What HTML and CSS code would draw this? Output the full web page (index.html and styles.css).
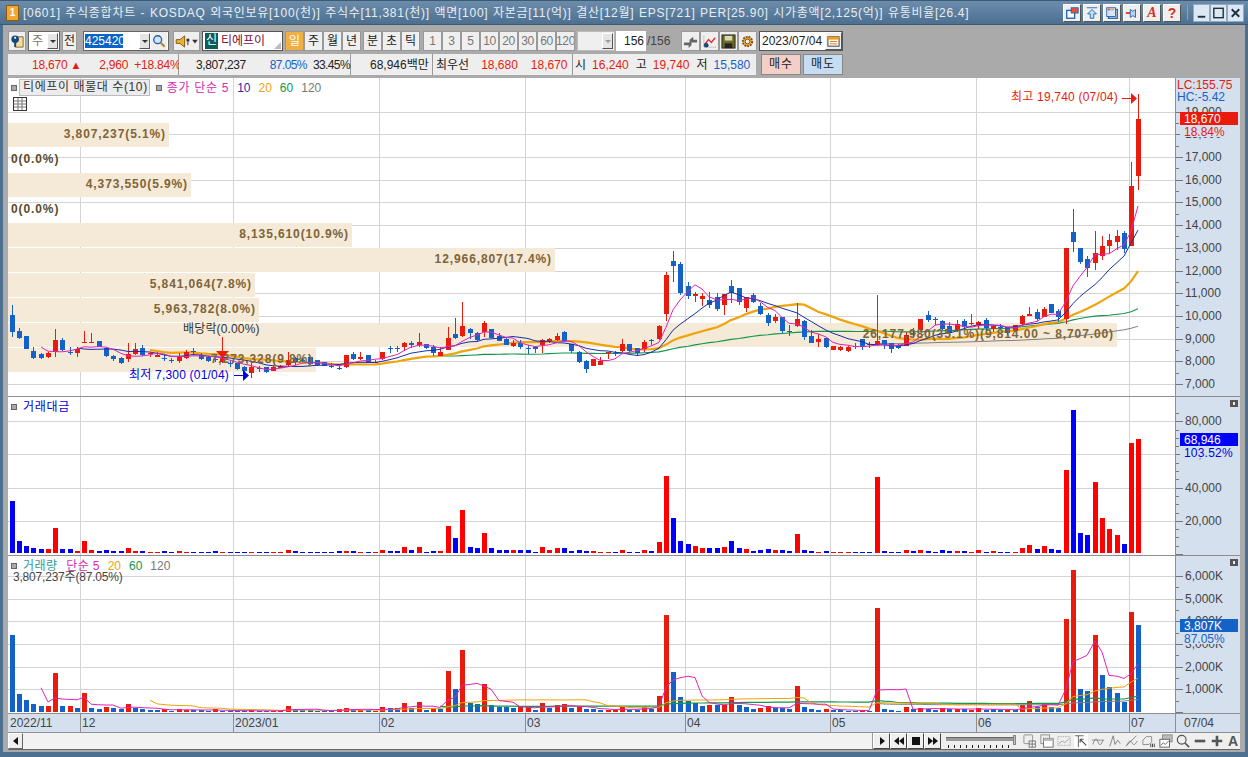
FILE: index.html
```html
<!DOCTYPE html>
<html>
<head>
  <meta charset="UTF-8">
  <title>주식종합차트</title>
  <link rel="stylesheet" href="styles.css">
</head>
<body>
  <div class="window">
    <div class="titlebar">
      <div class="app-icon">1</div>
      <div class="title">[0601] 주식종합차트 - KOSDAQ 외국인보유[100(천)] 주식수[11,381(천)] 액면[100] 자본금[11(억)] 결산[12월] EPS[721] PER[25.90] 시가총액[2,125(억)] 유통비율[26.4]</div>
      <div class="title-tools">
        <div class="tool"><svg viewBox="0 0 16 16"><rect x="2" y="5" width="9" height="9" fill="#fff" stroke="#1c5fb0" stroke-width="1.5"/><rect x="7" y="2" width="8" height="6" fill="#e8503a" stroke="#1c5fb0"/></svg></div>
        <div class="tool"><svg viewBox="0 0 16 16"><path d="M2 2h12M8 4l5 5h-3v5H6V9H3z" fill="#bfe0f5" stroke="#1c5fb0"/></svg></div>
        <div class="tool"><svg viewBox="0 0 16 16"><rect x="4" y="4" width="10" height="10" fill="none" stroke="#1c5fb0" stroke-width="1.5"/><rect x="2" y="2" width="10" height="10" fill="#d5e6f7" stroke="#1c5fb0"/><rect x="3" y="3" width="3" height="2" fill="#e8503a"/><rect x="7" y="3" width="3" height="2" fill="#e8a43a"/></svg></div>
        <div class="tool"><svg viewBox="0 0 16 16"><path d="M1 8h5" stroke="#e0301e" stroke-width="2"/><path d="M6 4l3 2 3-2v9l-3-2-3 2z" fill="#bcd6ee" stroke="#1c5fb0"/></svg></div>
        <div class="tool tool-a">A</div>
        <div class="tool tool-q">?</div>
      </div>
      <div class="title-sep"></div>
      <div class="win-btns">
        <div class="win-btn"><svg viewBox="0 0 16 16"><rect x="4" y="11" width="8" height="2" fill="#1f2f3f"/></svg></div>
        <div class="win-btn"><svg viewBox="0 0 16 16"><rect x="3" y="3" width="10" height="10" fill="none" stroke="#1f2f3f" stroke-width="1.5"/></svg></div>
        <div class="win-btn"><svg viewBox="0 0 16 16"><path d="M4 4l8 8M12 4l-8 8" stroke="#1f2f3f" stroke-width="2"/></svg></div>
      </div>
    </div>

    <div class="frame">
      <div class="toolbar">
        <div class="btn btn-book"><svg viewBox="0 0 16 16"><path d="M6 3h8v11H6z" fill="#f4dc9a" stroke="#7a6a30"/><circle cx="5.500" cy="5.500" r="4" fill="#14457c"/><path d="M5.500 8v6" stroke="#14457c" stroke-width="2"/><rect x="4.500" y="3" width="2" height="2" fill="#fff"/></svg></div>
        <div class="combo combo-kind"><span class="combo-text">주</span><span class="drop"></span></div>
        <div class="btn btn-all">전</div>
        <div class="combo combo-code">
          <span class="code-text">425420</span>
          <span class="drop"></span>
          <span class="search"><svg viewBox="0 0 16 16"><circle cx="6.500" cy="6.500" r="4.500" fill="#cfe6f7" stroke="#1c5fb0" stroke-width="1.5"/><path d="M10 10l4.500 4.500" stroke="#b8862c" stroke-width="2.500"/></svg></span>
        </div>
        <div class="btn btn-speaker"><svg viewBox="0 0 26 16"><path d="M2 6h4l5-4v12l-5-4H2z" fill="#f0b030" stroke="#7a5a10"/><rect x="13" y="5" width="3" height="3" fill="#333"/><rect x="14" y="8" width="1" height="4" fill="#333"/><path d="M19 6h6l-3 4z" fill="#333"/></svg></div>
        <div class="name-box"><span class="name-new">신</span><span class="name-text">티에프이</span><span class="name-grip"></span></div>
        <div class="group">
          <div class="btn period active">일</div>
          <div class="btn period">주</div>
          <div class="btn period">월</div>
          <div class="btn period">년</div>
        </div>
        <div class="group">
          <div class="btn period">분</div>
          <div class="btn period">초</div>
          <div class="btn period">틱</div>
        </div>
        <div class="group group-num">
          <div class="btn period num">1</div>
          <div class="btn period num">3</div>
          <div class="btn period num">5</div>
          <div class="btn period num">10</div>
          <div class="btn period num">20</div>
          <div class="btn period num">30</div>
          <div class="btn period num">60</div>
          <div class="btn period num">120</div>
        </div>
        <div class="combo combo-empty"><span class="combo-text"></span><span class="drop drop-off"></span></div>
        <div class="count-input">156</div>
        <div class="count-total">/156</div>
        <div class="group group-tools">
          <div class="btn period"><svg viewBox="0 0 16 16"><path d="M1 9h6V6l4-3v3h4v3H9v3l-3 3v-3H1z" fill="#666"/></svg></div>
          <div class="btn period"><svg viewBox="0 0 16 16"><path d="M2 2v12h13" fill="none" stroke="#999" stroke-dasharray="1 1"/><path d="M3 11l4-5 3 3 4-5" fill="none" stroke="#d33" stroke-width="1.500"/><circle cx="4.500" cy="12" r="2.500" fill="#14457c"/></svg></div>
          <div class="btn period btn-dark"><svg viewBox="0 0 16 16"><rect x="1" y="1" width="14" height="14" fill="#6d6a1c" stroke="#222"/><rect x="4" y="2" width="8" height="5" fill="#d8d8c0"/><rect x="4" y="10" width="8" height="5" fill="#222"/></svg></div>
          <div class="btn period"><svg viewBox="0 0 16 16"><circle cx="8" cy="8" r="5" fill="#f0b030" stroke="#8a4a10" stroke-width="2" stroke-dasharray="2 1"/><circle cx="8" cy="8" r="2.500" fill="#eee" stroke="#555"/></svg></div>
        </div>
        <div class="date-input"><span>2023/07/04</span><span class="cal"><svg viewBox="0 0 14 14"><rect x="1" y="2" width="12" height="10" fill="#fff" stroke="#333"/><rect x="1" y="2" width="12" height="3" fill="#f0a020"/><path d="M3 7h8M3 9.500h8" stroke="#d87010"/></svg></span></div>
      </div>

      <div class="quote-row">
        <div class="seg seg-price">
          <span class="red">18,670</span><span class="red up-mark">▲</span>
          <span class="red ml-change">2,960</span><span class="red ml-rate">+18.84%</span>
        </div>
        <div class="seg seg-vol">
          <span class="ml-volume">3,807,237</span><span class="blue ml-pct">87.05%</span><span class="ml-turn">33.45%</span>
        </div>
        <div class="seg seg-amount"><span>68,946백만</span></div>
        <div class="seg seg-best">
          <span>최우선</span><span class="red ml-ask">18,680</span><span class="red ml-bid">18,670</span>
        </div>
        <div class="seg seg-ohl">
          <span>시</span><span class="red ml-val">16,240</span>
          <span class="ml-key">고</span><span class="red ml-val">19,740</span>
          <span class="ml-key">저</span><span class="blue ml-val">15,580</span>
        </div>
        <div class="order buy">매수</div>
        <div class="order sell">매도</div>
      </div>

      <div class="chart">
        <div class="panel panel-main">
          <div class="plot">
            <svg id="plotMain"></svg>
            <div class="legend legend-main">
              <span class="dot"></span><span class="legend-box">티에프이 매물대 수(10)</span>
              <span class="dot dot-gap"></span>
              <span class="magenta sma-name">종가 단순 5</span><span class="navy">10</span><span class="orange">20</span><span class="green">60</span><span class="gray">120</span>
            </div>
            <div class="grid-icon"><svg viewBox="0 0 14 14"><rect x="0.500" y="0.500" width="13" height="13" fill="#fff" stroke="#333"/><path d="M1 4h12M1 7h12M1 10h12M5 1v12M9 1v12" stroke="#777"/></svg></div>
          </div>
          <svg class="axis" id="axisMain"></svg>
        </div>
        <div class="panel panel-amount">
          <div class="plot">
            <svg id="plotAmount"></svg>
            <div class="legend"><span class="dot"></span><span class="amount-name">거래대금</span></div>
          </div>
          <svg class="axis" id="axisAmount"></svg>
          <div class="panel-close"></div>
        </div>
        <div class="panel panel-volume">
          <div class="plot">
            <svg id="plotVolume"></svg>
            <div class="legend">
              <span class="dot"></span><span class="teal">거래량</span><span class="magenta sma-vol">단순 5</span><span class="orange">20</span><span class="green">60</span><span class="gray">120</span>
            </div>
            <div class="volume-info">3,807,237주(87.05%)</div>
          </div>
          <svg class="axis" id="axisVolume"></svg>
          <div class="panel-close"></div>
        </div>
        <div class="date-row">
          <svg id="dateAxis"></svg>
          <div class="date-last">07/04</div>
        </div>
      </div>

      <div class="scroll-row">
        <div class="scroll-btn"><svg viewBox="0 0 10 10"><path d="M7 1v8L2 5z" fill="#111"/></svg></div>
        <div class="scroll-track"></div>
        <div class="player">
          <div class="play-btn"><svg viewBox="0 0 10 10"><path d="M3 1l5 4-5 4z" fill="#111"/></svg></div>
          <div class="play-btn"><svg viewBox="0 0 10 10"><path d="M5 1v8L0 5zM10 1v8L5 5z" fill="#111"/></svg></div>
          <div class="play-btn"><svg viewBox="0 0 10 10"><rect x="1" y="1" width="8" height="8" fill="#111"/></svg></div>
          <div class="play-btn"><svg viewBox="0 0 10 10"><path d="M0 1l5 4-5 4zM5 1l5 4-5 4z" fill="#111"/></svg></div>
        </div>
        <div class="slider">
          <div class="slider-line"></div>
          <div class="slider-ticks"></div>
          <div class="slider-thumb"></div>
        </div>
        <div class="chart-tools">
          <svg viewBox="0 0 16 16"><rect x="1" y="1" width="10" height="10" rx="1" fill="none" stroke="#888"/><rect x="7" y="8" width="7" height="7" fill="#fff" stroke="#666"/><path d="M7 11.500h7M10.500 8v7" stroke="#666"/></svg>
          <svg viewBox="0 0 16 16"><rect x="1" y="1" width="10" height="10" fill="none" stroke="#888"/><rect x="4" y="5" width="11" height="10" fill="#fff" stroke="#666"/><rect x="4" y="5" width="11" height="3" fill="#bbb"/></svg>
          <svg viewBox="0 0 16 16"><rect x="1" y="3" width="14" height="10" fill="none" stroke="#999" stroke-dasharray="1 1"/><path d="M2 11l4-3 3 2 5-5" fill="none" stroke="#999"/></svg>
          <svg class="pressed" viewBox="0 0 16 16"><path d="M1 2h10M5 2v13" stroke="#555"/><path d="M7 6l7 7M7 6h4M7 6v4" stroke="#555" stroke-width="1.300" fill="none"/></svg>
          <svg viewBox="0 0 16 16"><path d="M1 7h14" stroke="#888"/><path d="M2 12c3-8 4-8 6-3s3 4 6-2" fill="none" stroke="#777"/></svg>
          <svg viewBox="0 0 16 16"><path d="M2 14L6 2l2 10 3-5 3 4" fill="none" stroke="#777"/></svg>
          <svg viewBox="0 0 16 16"><path d="M1 14L13 2" stroke="#777"/><path d="M2 13c3-6 4-6 6-3s3 3 6-2" fill="none" stroke="#777"/></svg>
          <svg viewBox="0 0 16 16"><path d="M1 7l4-4h6v6l-3 3H1z" fill="#eee" stroke="#888"/><path d="M10 11v4M12 11v4M14 11v4" stroke="#333"/></svg>
          <svg viewBox="0 0 16 16"><rect x="4" y="1" width="11" height="8" fill="#bbb" stroke="#888"/><rect x="1" y="6" width="11" height="9" fill="#fff" stroke="#555"/><path d="M2 13l3-3 2 2 4-4" fill="none" stroke="#555"/></svg>
          <svg viewBox="0 0 16 16"><circle cx="6.500" cy="6.500" r="5" fill="none" stroke="#555" stroke-width="1.300"/><path d="M10 10l5 5" stroke="#555" stroke-width="2"/></svg>
          <svg viewBox="0 0 16 16"><path d="M2 8h12" stroke="#555" stroke-width="3"/></svg>
          <svg viewBox="0 0 16 16"><path d="M2 8h12M8 2v12" stroke="#555" stroke-width="3"/></svg>
          <span class="tool-font">A</span>
        </div>
      </div>
    </div>
  </div>
  <script src="chart.js"></script>
</body>
</html>
```

FILE: styles.css
```css
html, body {
  margin: 0;
  padding: 0;
  overflow: hidden;
}
body {
  font-family: "Liberation Sans", "Noto Sans CJK KR", sans-serif;
  font-size: 12px;
  line-height: 14px;
  color: #222;
}
.window {
  width: 1248px;
  height: 757px;
  display: flex;
  flex-direction: column;
}

/* title bar */
.titlebar {
  height: 25px;
  flex: none;
  box-sizing: border-box;
  display: flex;
  align-items: center;
  background: linear-gradient(#6c8cab, #4d7090);
  border-top: 1px solid #3c5a74;
  border-bottom: 1px solid #3c5a74;
}
.app-icon {
  width: 11px;
  height: 14px;
  margin-left: 6px;
  background: #f0a830;
  border: 1px solid #8a5a10;
  color: #fff;
  font-size: 10px;
  font-weight: bold;
  line-height: 14px;
  text-align: center;
}
.title {
  margin-left: 4px;
  color: #e8eef4;
  letter-spacing: 0.72px;
  word-spacing: 0.6px;
  white-space: nowrap;
  flex: 1;
}
.title-tools {
  display: flex;
  gap: 2px;
}
.tool {
  width: 18px;
  height: 18px;
  box-sizing: border-box;
  background: #efefef;
  border: 1px solid;
  border-color: #fff #555 #555 #fff;
  display: flex;
  align-items: center;
  justify-content: center;
}
.tool svg {
  width: 14px;
  height: 14px;
}
.tool-a {
  font: italic bold 14px "Liberation Serif", serif;
  color: #d8301e;
}
.tool-q {
  font-weight: bold;
  font-size: 14px;
  color: #d8301e;
}
.title-sep {
  width: 1px;
  height: 15px;
  margin: 0 5px 0 6px;
  background: #8aa2b8;
}
.win-btns {
  display: flex;
  margin-right: 4px;
}
.win-btn {
  width: 17px;
  height: 18px;
  box-sizing: border-box;
  background: #dce8f3;
  border: 1px solid #93abc2;
}
.win-btn svg {
  display: block;
  width: 15px;
  height: 16px;
}

/* grey frame */
.frame {
  flex: 1;
  min-height: 0;
  box-sizing: border-box;
  display: flex;
  flex-direction: column;
  background: #aaa;
  border: 3px solid #4d7090;
  border-top: none;
  border-bottom-width: 5px;
  padding: 6px 5px 0 5px;
}

/* toolbar */
.toolbar {
  height: 20px;
  flex: none;
  display: flex;
}
.btn {
  height: 20px;
  box-sizing: border-box;
  background: #efefef;
  border: 1px solid;
  border-color: #fff #666 #666 #fff;
  outline: 1px solid #999;
  outline-offset: -1px;
  display: flex;
  align-items: center;
  justify-content: center;
}
.btn svg {
  width: 15px;
  height: 15px;
}
.btn-book {
  width: 18px;
}
.btn-all {
  width: 15px;
  margin-left: 2px;
}
.combo {
  height: 20px;
  box-sizing: border-box;
  background: #fff;
  border: 1px solid #666;
  display: flex;
  align-items: center;
}
.combo-kind {
  width: 32px;
  margin-left: 2px;
}
.combo-text {
  flex: 1;
  padding-left: 3px;
  color: #777;
}
.drop {
  width: 11px;
  height: 16px;
  margin-right: 1px;
  box-sizing: border-box;
  background: #e4e4e4;
  border: 1px solid;
  border-color: #fff #555 #555 #fff;
  position: relative;
}
.drop::after {
  content: "";
  position: absolute;
  left: 2px;
  top: 6px;
  border: 3px solid transparent;
  border-top: 3px solid #333;
  border-bottom: none;
}
.combo-code {
  width: 86px;
  margin-left: 6px;
}
.code-text {
  margin-left: 1px;
  width: 38px;
  color: #fff;
  background: #0a64c8;
}
.combo-code .drop {
  margin-left: 16px;
}
.search {
  width: 16px;
  height: 18px;
  background: #efefef;
  display: flex;
  align-items: center;
  justify-content: center;
}
.search svg {
  width: 14px;
  height: 14px;
}
.btn-speaker {
  width: 27px;
  margin-left: 4px;
}
.btn-speaker svg {
  width: 25px;
}
.name-box {
  width: 81px;
  height: 20px;
  margin-left: 2px;
  box-sizing: border-box;
  background: #fff;
  border: 1px solid #555;
  display: flex;
  align-items: center;
  position: relative;
}
.name-new {
  width: 13px;
  height: 16px;
  margin-left: 2px;
  background: #0c5c58;
  color: #fff;
  text-align: center;
  line-height: 15px;
}
.name-text {
  margin-left: 3px;
  color: #7a0a3c;
}
.name-grip {
  position: absolute;
  right: 1px;
  bottom: 1px;
  border-left: 7px solid transparent;
  border-bottom: 7px solid #bbb;
}
.group {
  display: flex;
  margin-left: 2px;
}
.period {
  width: 19px;
}
.period.active {
  background: #f0ae44;
  color: #fff;
}
.group-num {
  margin-left: 3px;
}
.num {
  color: #777;
  letter-spacing: -0.4px;
}
.combo-empty {
  width: 38px;
  margin-left: 2px;
  background: #efefef;
  border-color: #bbb;
}
.drop-off::after {
  border-top-color: #999;
}
.count-input {
  width: 30px;
  height: 20px;
  margin-left: 1px;
  box-sizing: border-box;
  background: #fff;
  padding-right: 2px;
  line-height: 20px;
  text-align: right;
}
.count-total {
  width: 34px;
  height: 20px;
  margin-left: 1px;
  line-height: 20px;
  color: #444;
}
.group-tools {
  margin-left: 0;
}
.btn-dark {
  border-color: #555 #fff #fff #555;
}
.date-input {
  width: 84px;
  height: 20px;
  margin-left: 2px;
  box-sizing: border-box;
  background: #fff;
  border: 1px solid #555;
  padding-left: 2px;
  display: flex;
  align-items: center;
  justify-content: space-between;
}
.cal {
  width: 17px;
  height: 18px;
  box-sizing: border-box;
  background: #efefef;
  border: 1px solid;
  border-color: #fff #555 #555 #fff;
  display: flex;
  align-items: center;
  justify-content: center;
}
.cal svg {
  width: 13px;
  height: 13px;
}

/* quote row */
.quote-row {
  height: 21px;
  margin-top: 3px;
  flex: none;
  display: flex;
}
.seg {
  height: 21px;
  box-sizing: border-box;
  background: #eee;
  border-right: 1px solid #999;
  display: flex;
  align-items: center;
  white-space: nowrap;
}
.seg-price {
  width: 171px;
  padding-left: 24px;
  letter-spacing: -0.2px;
}
.seg-vol {
  width: 172px;
}
.seg-amount {
  width: 82px;
  padding-left: 19px;
}
.seg-best {
  width: 140px;
  padding-left: 3px;
}
.seg-ohl {
  width: 183px;
  padding-left: 2px;
  border-right: none;
}
.red { color: #e81b0c; }
.blue { color: #1461c8; }
.up-mark { margin-left: 3px; font-size: 11px; }
.ml-change { margin-left: 18px; }
.ml-rate { margin-left: 6px; }
.ml-volume { margin-left: 17px; letter-spacing: -0.4px; }
.ml-pct { margin-left: 24px; letter-spacing: -0.6px; }
.ml-turn { margin-left: 6px; letter-spacing: -0.6px; }
.ml-ask { margin-left: 12px; }
.ml-bid { margin-left: 13px; }
.ml-val { margin-left: 6px; }
.ml-key { margin-left: 7px; }
.order {
  width: 40px;
  height: 21px;
  box-sizing: border-box;
  border: 1px solid #888;
  text-align: center;
  line-height: 19px;
  letter-spacing: 1px;
}
.buy {
  margin-left: 5px;
  background: #f3cfc8;
}
.sell {
  margin-left: 2px;
  background: #c5dcf2;
}

/* chart panels */
.chart {
  height: 654px;
  margin-top: 3px;
  flex: none;
  display: flex;
  flex-direction: column;
  background: #fff;
}
.panel {
  display: flex;
  flex: none;
  box-sizing: border-box;
  position: relative;
  border-bottom: 1px solid #8f8f8f;
}
.panel-main { height: 319px; }
.panel-amount { height: 159px; }
.panel-volume { height: 158px; }
.plot {
  width: 1167px;
  height: 100%;
  flex: none;
  position: relative;
}
.plot svg {
  display: block;
}
.axis {
  flex: none;
  display: block;
  background: #d5e0ef;
  border-left: 1px solid #8f8f8f;
}
text {
  font-family: "Liberation Sans", "Noto Sans CJK KR", sans-serif;
  font-size: 12px;
}
.peach-text {
  font-weight: bold;
  fill: #7e6437;
  letter-spacing: 0.9px;
}
.peach-zero {
  font-weight: bold;
  fill: #5c4a28;
  letter-spacing: 0.9px;
}
.axis-text { fill: #444; }
.hl-text { fill: #fff; }
.lc-text { fill: #e81b0c; }
.hc-text { fill: #1461c8; }
.note-dark { fill: #333; letter-spacing: 0.15px; }
.note-blue { fill: #0000e0; letter-spacing: 0.2px; }
.note-red { fill: #e81b0c; letter-spacing: 0.2px; }

/* legends over the plots */
.legend {
  position: absolute;
  left: 3px;
  top: 1px;
  height: 17px;
  display: flex;
  align-items: center;
  white-space: nowrap;
}
.dot {
  width: 4px;
  height: 4px;
  background: #aaa;
  border: 1px solid #666;
  margin-right: 2px;
}
.dot-gap {
  margin-left: 6px;
  margin-right: 5px;
}
.legend-box {
  height: 15px;
  background: #ececec;
  border: 1px solid #bbb;
  padding: 0 1px 0 3px;
  line-height: 15px;
  color: #333;
  letter-spacing: 0.6px;
}
.sma-name { letter-spacing: 0.7px; }
.sma-vol { letter-spacing: 0.3px; }
.magenta { color: #d42ab0; }
.navy { color: #1a2fa8; margin-left: 8px; }
.orange { color: #eea40a; margin-left: 8px; }
.green { color: #12964a; margin-left: 8px; }
.gray { color: #777; margin-left: 8px; }
.teal {
  color: #339a9a;
  margin-left: 4px;
  margin-right: 9px;
  letter-spacing: 0.4px;
}
.amount-name { color: #0000e0; margin-left: 4px; letter-spacing: 0.7px; }
.grid-icon {
  position: absolute;
  left: 5px;
  top: 19px;
  width: 14px;
  height: 14px;
}
.volume-info {
  position: absolute;
  left: 5px;
  top: 14px;
  color: #444;
  letter-spacing: -0.2px;
}
.panel-close {
  position: absolute;
  right: 2px;
  top: 3px;
  width: 8px;
  height: 7px;
  background: #555;
}
.panel-close::after {
  content: "";
  position: absolute;
  left: 3px;
  top: 2px;
  width: 2px;
  height: 3px;
  background: #eee;
}
.date-row {
  height: 18px;
  flex: none;
  background: #d5e0ef;
  display: flex;
  border-bottom: 1px solid #8f8f8f;
}
.date-row svg {
  width: 1167px;
  height: 18px;
  flex: none;
  display: block;
}
.date-last {
  flex: 1;
  border-left: 1px solid #8f8f8f;
  padding-left: 8px;
  line-height: 18px;
  color: #444;
}

/* bottom scroll row */
.scroll-row {
  height: 16px;
  margin-top: 1px;
  flex: none;
  display: flex;
  align-items: stretch;
  background: #efefef;
  border-bottom: 1px solid #666;
}
.scroll-btn {
  width: 15px;
  box-sizing: border-box;
  border: 1px solid;
  border-color: #fff #666 #666 #fff;
  display: flex;
  align-items: center;
  justify-content: center;
}
.scroll-btn svg,
.play-btn svg {
  width: 10px;
  height: 10px;
}
.scroll-track {
  width: 849px;
  background: #f2f2f2;
  border-right: 1px solid #999;
}
.player {
  display: flex;
}
.play-btn {
  width: 17px;
  box-sizing: border-box;
  border: 1px solid;
  border-color: #fff #444 #444 #fff;
  display: flex;
  align-items: center;
  justify-content: center;
}
.slider {
  width: 70px;
  margin-left: 5px;
  position: relative;
}
.slider-line {
  position: absolute;
  left: 0;
  right: 2px;
  top: 4px;
  height: 3px;
  background: #999;
  border-top: 1px solid #666;
}
.slider-ticks {
  position: absolute;
  left: 2px;
  right: 2px;
  top: 12px;
  height: 3px;
  background: repeating-linear-gradient(90deg, #222 0, #222 1px, transparent 1px, transparent 6px);
}
.slider-thumb {
  position: absolute;
  right: 0;
  top: 2px;
  width: 3px;
  height: 10px;
  background: #bbb;
  border: 1px solid #888;
  box-sizing: border-box;
}
.chart-tools {
  margin-left: 7px;
  display: flex;
  align-items: center;
  gap: 3px;
}
.chart-tools svg {
  width: 14px;
  height: 14px;
  flex: none;
}
.chart-tools .pressed {
  background: #fff;
}
.tool-font {
  font-weight: bold;
  font-size: 14px;
  color: #555;
  margin-left: 1px;
}
```

FILE: chart.js
```js
// candles in screen px: [high, body top, body bottom, low, up?]
const candles = [
  [305,315,332,337,0],[328,331,338,339,0],[336,336,349,349,0],[347,351,358,359,0],[353,354,358,359,0],
  [352,353,357,358,1],[329,340,352,357,1],[338,340,350,351,0],[347,352,353,355,0],[347,349,353,357,1],
  [331,342,343,343,1],[333,342,343,343,1],[341,341,347,347,0],[347,348,356,357,0],[355,356,359,361,0],
  [357,358,363,364,0],[343,354,359,362,1],[343,349,354,355,1],[345,348,355,356,0],[352,353,354,357,1],
  [352,355,357,357,1],[354,358,358,361,0],[358,360,361,363,0],[353,356,361,363,1],[350,352,358,359,1],
  [348,351,352,355,0],[353,355,359,360,0],[356,357,361,362,0],[358,359,360,362,0],[353,358,362,363,1],
  [361,363,363,367,0],[363,363,369,370,0],[366,367,371,372,0],[363,367,373,378,1],[366,368,369,372,0],
  [367,367,372,373,0],[366,367,371,371,1],[365,366,368,368,1],[352,360,365,367,1],[357,358,362,365,0],
  [358,360,361,362,0],[357,357,364,365,0],[360,360,365,366,0],[362,362,366,366,0],[363,366,366,368,0],
  [365,368,368,370,0],[355,355,367,368,1],[352,354,359,360,0],[352,357,359,360,1],[355,355,363,363,0],
  [360,362,362,363,1],[352,352,359,360,1],[346,348,348,353,0],[346,348,348,352,0],[342,343,347,351,1],
  [341,343,345,348,0],[333,342,345,347,1],[344,344,348,349,0],[345,347,353,356,0],[347,352,356,356,1],
  [327,338,350,350,1],[318,334,338,339,0],[302,326,336,337,1],[328,329,333,339,0],[332,333,340,342,0],
  [321,323,332,337,1],[329,329,338,338,0],[333,336,341,341,0],[337,339,345,345,0],[340,343,346,347,1],
  [340,343,347,349,0],[345,348,349,354,0],[346,347,349,353,0],[339,340,345,353,1],[338,339,341,343,1],
  [333,336,340,341,1],[331,332,341,342,0],[344,344,351,353,0],[351,352,362,363,0],[360,361,369,373,0],
  [359,359,366,366,1],[357,361,365,365,1],[352,352,353,359,1],[351,353,353,356,0],[339,344,351,352,1],
  [344,344,351,353,0],[348,348,353,356,0],[340,342,349,352,1],[339,340,340,345,0],[325,326,339,340,1],
  [272,275,314,321,1],[251,261,266,282,0],[262,264,293,295,0],[282,286,296,299,0],[292,294,296,302,1],
  [293,296,299,306,1],[292,300,305,308,0],[293,297,309,311,0],[294,294,305,315,1],[280,286,293,303,0],
  [288,288,302,305,0],[297,297,308,312,1],[293,295,302,303,0],[303,306,314,315,0],[313,315,323,326,0],
  [314,317,321,323,1],[317,317,331,333,0],[325,331,331,336,0],[303,319,326,327,1],[320,321,337,340,0],
  [330,336,343,343,0],[334,339,342,347,1],[337,338,347,348,0],[346,346,350,350,1],[346,347,350,351,1],
  [346,347,351,352,1],[343,346,346,349,0],[339,339,347,350,0],[342,344,344,348,0],[295,341,345,346,1],
  [340,340,345,349,0],[343,343,349,353,0],[344,345,348,349,0],[332,335,346,346,1],[328,333,333,338,0],
  [319,319,330,331,1],[311,315,320,322,0],[317,319,319,325,0],[320,321,329,330,0],[322,326,333,333,0],
  [320,324,330,332,1],[319,321,327,329,0],[314,323,324,325,1],[321,322,325,329,1],[318,320,328,330,0],
  [325,326,329,332,1],[324,327,327,330,0],[327,327,333,335,0],[325,325,331,332,1],[315,316,324,325,1],
  [307,314,316,316,1],[309,312,319,321,0],[307,309,317,317,1],[304,304,313,313,0],[309,311,317,322,0],
  [248,248,319,324,1],[209,232,242,252,0],[248,248,262,264,0],[256,259,268,277,0],[231,253,263,270,1],
  [236,246,256,260,1],[234,240,246,253,1],[230,236,242,250,1],[231,233,249,253,0],[162,186,246,246,1],
  [94,119,176,190,1]
];

// volume bar heights in px, negative = blue bar
const volume = [
  -77,-18,-12,-8,-6,6,39,-6,6,-4,19,-4,-3,5,-4,-3,8,-4,-3,-2,
  -2,3,-1,3,2,-2,-2,-1,3,-1,-1,-1,-1,2,-1,-1,1,1,6,-3,
  -2,-2,-1,-1,-1,3,4,-3,2,-2,1,5,-4,-4,9,-4,10,-2,4,-3,
  41,-23,62,-9,-8,28,-7,-5,-5,-4,5,5,-2,9,-4,7,8,-4,5,-3,
  -3,-2,2,2,5,-2,-2,5,-3,16,97,-40,-15,-11,-9,-6,7,-7,7,15,
  -7,-5,-3,4,6,-4,-4,-3,26,-5,-3,-2,3,-2,-2,-1,-1,2,-1,104,
  -3,-2,-1,5,-3,4,-3,-2,4,-3,3,-3,2,4,-2,-3,-2,2,-2,7,
  11,-5,9,-5,-4,93,142,-23,-21,77,-37,-25,-19,-10,100,-87
];

// trading value bars that were read off directly
const amountFixed = { 90: 77, 108: 19, 119: 76, 145: 83, 146: 143, 149: 71, 154: 110, 155: 114 };

const monthLines = [80, 233, 379, 525, 685, 830, 976, 1129];
const monthLabels = [[10, '2022/11'], [82, '12'], [235, '2023/01'], [381, '02'], [527, '03'], [687, '04'], [832, '05'], [978, '06'], [1131, '07']];

const RED = '#e81b0c', BLUE = '#1461c8';
const cx = i => Math.round(11.5 + 7.27 * i);
const priceY = p => 384 - (p - 7000) * 0.0227;

function rect(x, y, w, h, fill) {
  return `<rect x="${x}" y="${y}" width="${w}" height="${h}" fill="${fill}" shape-rendering="crispEdges"/>`;
}
function line(x1, y1, x2, y2, stroke) {
  return `<line x1="${x1}" y1="${y1}" x2="${x2}" y2="${y2}" stroke="${stroke}" shape-rendering="crispEdges"/>`;
}
function text(x, y, str, cls, anchor) {
  return `<text x="${x}" y="${y}" class="${cls}"${anchor ? ' text-anchor="end"' : ''}>${str}</text>`;
}
function polyline(points, stroke, width) {
  const p = points.map(a => a.join(',')).join(' ');
  return `<polyline points="${p}" fill="none" stroke="${stroke}" stroke-width="${width}"/>`;
}
function movingAvg(values, n, toY) {
  const pts = [];
  for (let i = n - 1; i < values.length; i++) {
    let sum = 0;
    for (let j = i - n + 1; j <= i; j++) sum += values[j];
    pts.push([cx(i), +toY(sum / n).toFixed(1)]);
  }
  return pts;
}
function paint(id, x, y, w, h, content) {
  const svg = document.getElementById(id);
  svg.setAttribute('viewBox', `${x} ${y} ${w} ${h}`);
  svg.setAttribute('width', w);
  svg.setAttribute('height', h);
  svg.innerHTML = content;
}
function gridLines(top, bottom, ys) {
  let out = '';
  ys.forEach(y => { out += line(8, y + 0.5, 1175, y + 0.5, '#d4d4d4'); });
  monthLines.forEach(x => { out += line(x + 0.5, top, x + 0.5, bottom, '#d4d4d4'); });
  return out;
}

/* ---- price panel ---- */
const peachRows = [
  [123, 169, '3,807,237(5.1%)'],
  [148, 0, '0(0.0%)'],
  [173, 191, '4,373,550(5.9%)'],
  [198, 0, '0(0.0%)'],
  [223, 352, '8,135,610(10.9%)'],
  [248, 555, '12,966,807(17.4%)'],
  [273, 255, '5,841,064(7.8%)'],
  [298, 259, '5,963,782(8.0%)'],
  [323, 1117, '26,177,980(35.1%)(9,814.00 ~ 8,707.00)'],
  [348, 316, '7,273,328(9.8%)']
];

let main = '';
const ticks = [];
for (let p = 7000; p <= 19000; p += 1000) ticks.push(Math.round(priceY(p)));
main += gridLines(78, 396, ticks);
peachRows.forEach(r => { if (r[1]) main += rect(8, r[0], r[1] - 8, 24, '#f5e9d8'); });

const closes = candles.map(c => (c[4] ? c[1] : c[2]));
main += polyline(movingAvg(closes, 120, y => y), '#808080', 1);
main += polyline(movingAvg(closes, 60, y => y), '#12964a', 1.1);
main += polyline(movingAvg(closes, 20, y => y), '#eea40a', 2.2);

candles.forEach((c, i) => {
  const x = cx(i), col = c[4] ? RED : BLUE;
  main += rect(x, c[0], 1, c[3] - c[0], col);
  main += rect(x - 2, c[1], 5, Math.max(c[2] - c[1], 1), col);
});

main += polyline(movingAvg(closes, 10, y => y), '#1a2fa8', 1);
main += polyline(movingAvg(closes, 5, y => y), '#e024b8', 1);

peachRows.forEach(r => {
  if (r[1]) main += text(r[1] - 3, r[0] + 15, r[2], 'peach-text', true);
  else main += text(11, r[0] + 15, r[2], 'peach-zero');
});

main += text(183, 333, '배당락(0.00%)', 'note-dark');
main += line(222.5, 337, 222.5, 351, '#e81b0c') + '<path d="M216 351h13l-6.500 7z" fill="#e81b0c"/>';
main += text(129, 379, '최저 7,300 (01/04)', 'note-blue');
main += line(234, 375.5, 244, 375.5, '#0000e0') + '<path d="M243 370v11l6-5.500z" fill="#0000e0"/>';
main += text(1011, 101, '최고 19,740 (07/04)', 'note-red');
main += line(1122, 98.5, 1132, 98.5, '#e81b0c') + '<path d="M1131 93v11l6-5.500z" fill="#e81b0c"/>';
paint('plotMain', 8, 78, 1167, 318, main);

/* ---- price axis ---- */
function axisTicks(from, to, step, minor, toY, fmt) {
  const x0 = 1176;
  let out = '';
  for (let v = from; v <= to; v += minor) {
    const y = Math.round(toY(v)) + 0.5, major = v % step === 0;
    out += line(x0, y, x0 + (major ? 7 : 3), y, '#777');
    if (major && v > 0) out += text(x0 + 9, y + 3.5, fmt(v), 'axis-text');
  }
  return out;
}
function priceTag(top, bg, value, pct, pctCls) {
  let out = rect(1180, top + 13, 60, 12, '#d5e0ef');
  out += rect(1180, top, 58, 13, bg);
  out += text(1184, top + 11, value, 'hl-text');
  out += text(1184, top + 24, pct, pctCls);
  return out;
}
const comma = v => v.toLocaleString('en-US');

let ax = axisTicks(7000, 19000, 1000, 500, priceY, comma);
ax += rect(1176, 79, 62, 22, '#d5e0ef');
ax += text(1177, 89, 'LC:155.75', 'lc-text');
ax += text(1177, 101, 'HC:-5.42', 'hc-text');
ax += priceTag(112, RED, '18,670', '18.84%', 'lc-text');
paint('axisMain', 1176, 78, 64, 318, ax);

/* ---- trading value panel ---- */
const amtY = v => 554 - v * 0.00166;
let amt = gridLines(397, 555, [20000, 40000, 60000, 80000].map(v => Math.round(amtY(v))));
volume.forEach((v, i) => {
  const price = 7000 + (384 - closes[i]) / 0.0227;
  const h = amountFixed[i] || Math.max(1, Math.round(Math.abs(v) * price * 7.2e-5));
  amt += rect(cx(i) - 2, 553 - h, 5, h, candles[i][4] ? '#ff0000' : '#0000ff');
});
paint('plotAmount', 8, 397, 1167, 158, amt);

let ax2 = axisTicks(0, 85000, 20000, 5000, amtY, comma);
ax2 += priceTag(433, '#0000ff', '68,946', '103.52%', 'note-blue');
paint('axisAmount', 1176, 397, 64, 158, ax2);

/* ---- volume panel ---- */
const volY = v => 712 - v * 0.0227;
let vol = gridLines(556, 714, [1000, 2000, 3000, 4000, 5000, 6000].map(v => Math.round(volY(v))));
volume.forEach((v, i) => {
  const h = Math.abs(v);
  vol += rect(cx(i) - 2, 712 - h, 5, h, v > 0 ? RED : BLUE);
});
const sizes = volume.map(Math.abs);
const baseY = h => 712 - h;
vol += polyline(movingAvg(sizes, 120, baseY), '#808080', 1);
vol += polyline(movingAvg(sizes, 60, baseY), '#12964a', 1.2);
vol += polyline(movingAvg(sizes, 20, baseY), '#eea40a', 1);
vol += polyline(movingAvg(sizes, 5, baseY), '#e024b8', 1);
paint('plotVolume', 8, 556, 1167, 157, vol);

let ax3 = axisTicks(0, 6000, 1000, 500, volY, v => comma(v) + 'K');
ax3 += priceTag(619, BLUE, '3,807K', '87.05%', 'hc-text');
paint('axisVolume', 1176, 556, 64, 157, ax3);

/* ---- date strip ---- */
let dates = '';
monthLines.forEach(x => { dates += line(x + 0.5, 714, x + 0.5, 732, '#8f8f8f'); });
monthLabels.forEach(m => { dates += text(m[0], 727, m[1], 'axis-text'); });
paint('dateAxis', 8, 714, 1167, 18, dates);
```
